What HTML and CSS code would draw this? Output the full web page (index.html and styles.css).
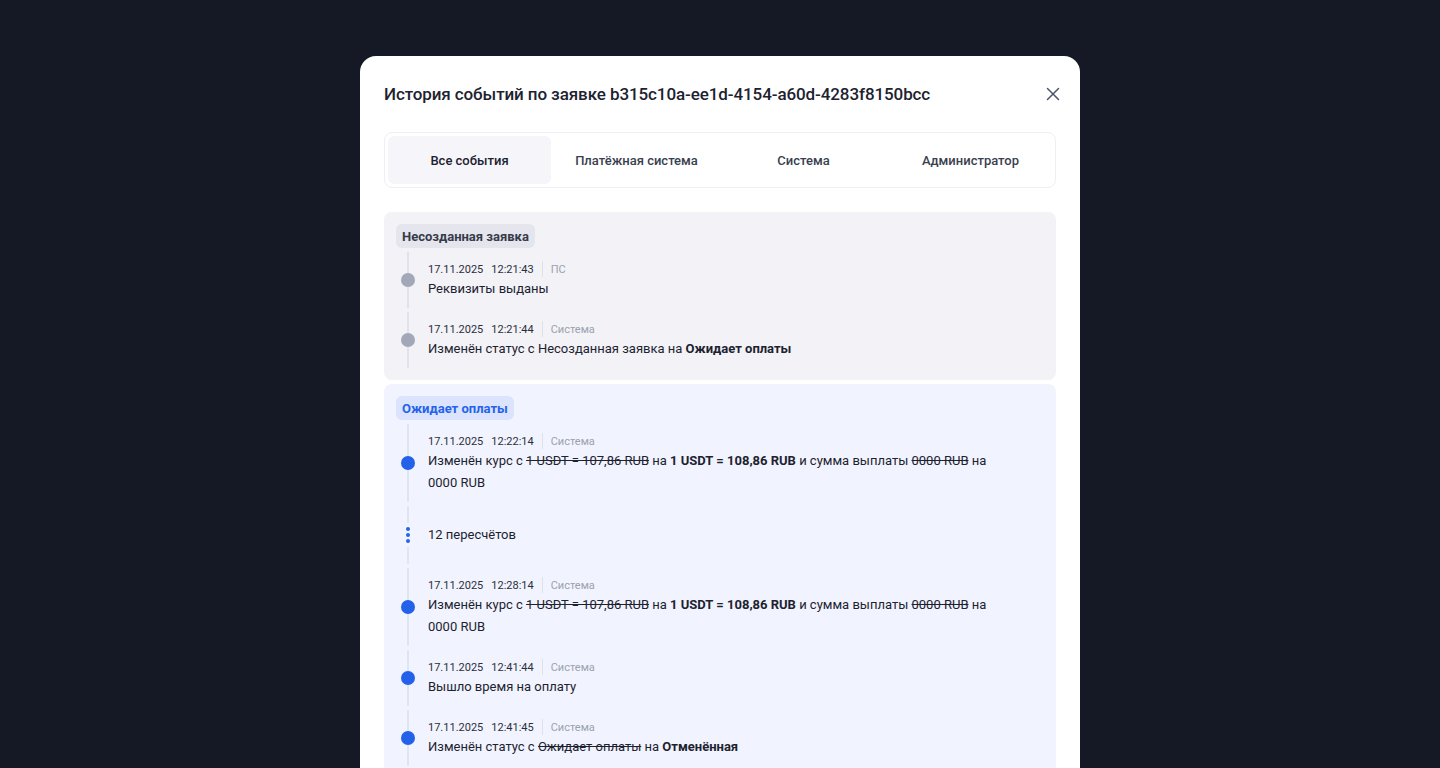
FILE: index.html
```html
<!DOCTYPE html>
<html lang="ru">
<head>
<meta charset="utf-8">
<title>История событий</title>
<link rel="stylesheet" href="styles.css">
</head>
<body>
<div class="overlay">
  <div class="modal">
    <div class="modal-head">
      <h2 class="title">История событий по заявке b315c10a-ee1d-4154-a60d-4283f8150bcc</h2>
      <button class="close" aria-label="Закрыть">
        <svg width="14" height="14" viewBox="0 0 14 14"><path d="M1.5 1.5 12.5 12.5M12.5 1.5 1.5 12.5" stroke="#4b5468" stroke-width="1.5" stroke-linecap="round" fill="none"/></svg>
      </button>
    </div>
    <div class="tabs">
      <button class="tab active">Все события</button>
      <button class="tab">Платёжная система</button>
      <button class="tab">Система</button>
      <button class="tab">Администратор</button>
    </div>
    <div class="groups">
      <section class="group grey">
        <span class="badge">Несозданная заявка</span>
        <div class="item">
          <div class="rail"><span class="dot"></span></div>
          <div class="content">
            <div class="meta"><span>17.11.2025</span><span>12:21:43</span><span class="sep"></span><span class="src">ПС</span></div>
            <div class="text">Реквизиты выданы</div>
          </div>
        </div>
        <div class="item">
          <div class="rail"><span class="dot"></span></div>
          <div class="content">
            <div class="meta"><span>17.11.2025</span><span>12:21:44</span><span class="sep"></span><span class="src">Система</span></div>
            <div class="text">Изменён статус с Несозданная заявка на <b>Ожидает оплаты</b></div>
          </div>
        </div>
      </section>
      <section class="group blue">
        <span class="badge">Ожидает оплаты</span>
        <div class="item">
          <div class="rail"><span class="dot"></span></div>
          <div class="content">
            <div class="meta"><span>17.11.2025</span><span>12:22:14</span><span class="sep"></span><span class="src">Система</span></div>
            <div class="text">Изменён курс с <s>1 USDT = 107,86&nbsp;RUB</s> на <b>1 USDT = 108,86&nbsp;RUB</b> и сумма выплаты <s>0000&nbsp;RUB</s> на 0000&nbsp;RUB</div>
          </div>
        </div>
        <div class="item recount">
          <div class="rail"><span class="more"><i></i><i></i><i></i></span></div>
          <div class="content">
            <div class="text">12 пересчётов</div>
          </div>
        </div>
        <div class="item">
          <div class="rail"><span class="dot"></span></div>
          <div class="content">
            <div class="meta"><span>17.11.2025</span><span>12:28:14</span><span class="sep"></span><span class="src">Система</span></div>
            <div class="text">Изменён курс с <s>1 USDT = 107,86&nbsp;RUB</s> на <b>1 USDT = 108,86&nbsp;RUB</b> и сумма выплаты <s>0000&nbsp;RUB</s> на 0000&nbsp;RUB</div>
          </div>
        </div>
        <div class="item">
          <div class="rail"><span class="dot"></span></div>
          <div class="content">
            <div class="meta"><span>17.11.2025</span><span>12:41:44</span><span class="sep"></span><span class="src">Система</span></div>
            <div class="text">Вышло время на оплату</div>
          </div>
        </div>
        <div class="item">
          <div class="rail"><span class="dot"></span></div>
          <div class="content">
            <div class="meta"><span>17.11.2025</span><span>12:41:45</span><span class="sep"></span><span class="src">Система</span></div>
            <div class="text">Изменён статус с <s>Ожидает оплаты</s> на <b>Отменённая</b></div>
          </div>
        </div>
        <div class="item">
          <div class="rail"><span class="dot"></span></div>
          <div class="content">
            <div class="meta"><span>17.11.2025</span><span>12:41:46</span><span class="sep"></span><span class="src">Система</span></div>
            <div class="text">Заявка закрыта</div>
          </div>
        </div>
      </section>
    </div>
  </div>
</div>
</body>
</html>
```

FILE: styles.css
```css
* { box-sizing: border-box; }
html, body { margin: 0; padding: 0; height: 100%; }
body {
  background: #151925;
  font-family: Roboto, "Noto Sans", "Liberation Sans", sans-serif;
  color: #1d2230;
  overflow: hidden;
}
.overlay {
  display: flex;
  justify-content: center;
  padding-top: 56px;
}
.modal {
  width: 720px;
  background: #ffffff;
  border-radius: 16px;
  padding: 24px 24px 40px;
}
.modal-head {
  display: flex;
  align-items: center;
  justify-content: space-between;
  height: 28px;
}
.title {
  margin: 0;
  font-size: 17px;
  font-weight: 500;
  line-height: 28px;
  color: #1d2230;
  letter-spacing: -0.1px;
}
.close {
  border: 0;
  background: none;
  padding: 0;
  width: 20px;
  height: 20px;
  display: flex;
  align-items: center;
  justify-content: center;
  margin-right: -7px;
  cursor: pointer;
}
.tabs {
  margin-top: 24px;
  display: flex;
  gap: 4px;
  padding: 3px;
  border: 1px solid #eff0f4;
  border-radius: 8px;
}
.tab {
  flex: 1;
  height: 48px;
  border: 0;
  border-radius: 6px;
  background: transparent;
  font-family: inherit;
  font-size: 13px;
  font-weight: 500;
  color: #3a3f4f;
}
.tab.active {
  background: #f6f6fa;
  color: #1d2230;
}
.groups {
  margin-top: 24px;
  display: flex;
  flex-direction: column;
  gap: 4px;
}
.group {
  border-radius: 8px;
  padding: 12px;
  display: flex;
  flex-direction: column;
  align-items: flex-start;
  gap: 4px;
}
.group.grey { background: #f2f2f7; --line: #e2e3ea; --dot: #a3a8b8; }
.group.blue { background: #f1f4fe; --line: #e0e5f4; --dot: #2362e8; }
.badge {
  display: inline-flex;
  align-items: center;
  height: 24px;
  padding: 0 6px;
  border-radius: 6px;
  font-size: 13px;
  font-weight: 700;
}
.grey .badge { background: #e4e5ed; color: #363b4a; }
.blue .badge { background: #dbe4fc; color: #2563eb; }
.item {
  display: flex;
  gap: 8px;
  align-self: stretch;
}
.rail {
  width: 24px;
  flex: none;
  display: flex;
  align-items: center;
  justify-content: center;
  background: linear-gradient(var(--line), var(--line)) center / 2px 100% no-repeat;
}
.dot {
  width: 14px;
  height: 14px;
  border-radius: 50%;
  background: var(--dot);
}
.content {
  padding: 8px 0;
  max-width: 566px;
}
.meta {
  display: flex;
  align-items: center;
  gap: 8px;
  height: 18px;
  font-size: 11px;
  color: #2a2f3d;
}
.sep {
  width: 1px;
  height: 16px;
  background: #dfe1e8;
}
.src { color: #9ca1ae; }
.text {
  font-size: 13px;
  line-height: 22px;
  color: #1d2230;
}
.text b { font-weight: 700; }
.text s { text-decoration: line-through; }
.recount .rail {
  background: none;
  flex-direction: column;
  gap: 4px;
}
.recount .rail::before,
.recount .rail::after {
  content: "";
  flex: 1;
  width: 2px;
  background: var(--line);
}
.recount .content { padding: 18px 0; }
.more {
  display: flex;
  flex-direction: column;
  gap: 2px;
}
.more i {
  width: 4px;
  height: 4px;
  border-radius: 50%;
  background: #2563eb;
}
```
